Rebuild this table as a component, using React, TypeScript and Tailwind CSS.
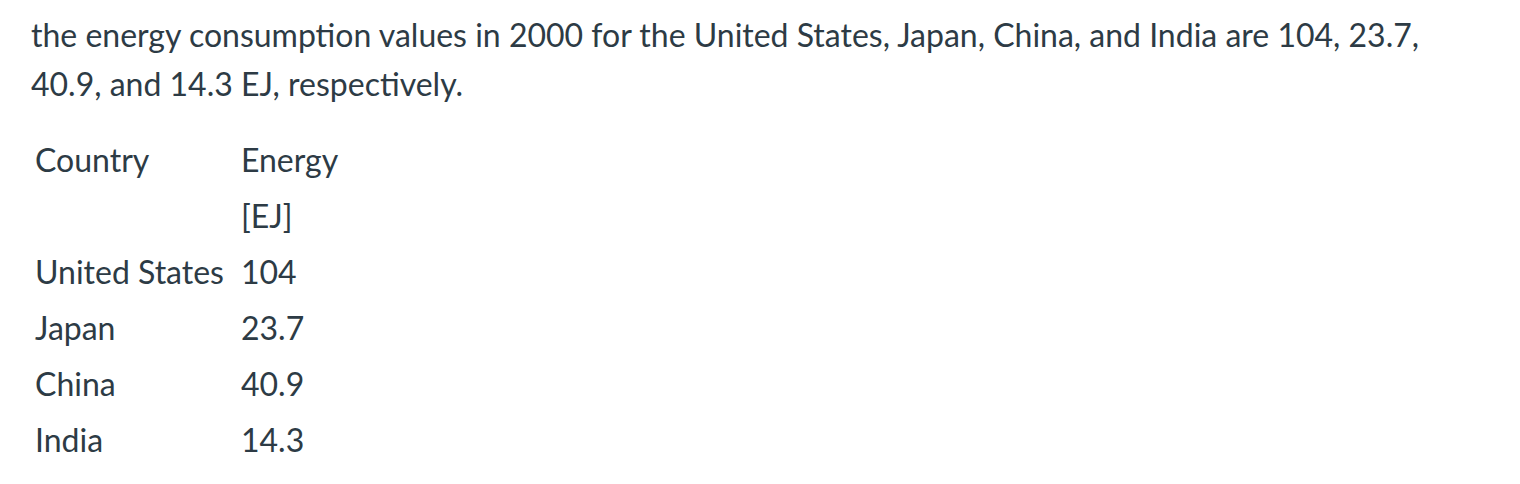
const rows = [
  { country: "United States", energy: "104" },
  { country: "Japan", energy: "23.7" },
  { country: "China", energy: "40.9" },
  { country: "India", energy: "14.3" },
];

export default function App() {
  return (
    <div className="min-h-[484px] w-[1520px] bg-white px-[31px] pt-[10px] font-['Lato',sans-serif] text-[32px] leading-[49px] text-[#2d3b45]">
      <p className="w-[1430px]">
        the energy consumption values in 2000 for the United States, Japan, China, and India are 104, 23.7,
        40.9, and 14.3 EJ, respectively.
      </p>
      <table className="mt-[24px] border-collapse leading-[56px]">
        <thead>
          <tr>
            <th className="px-[4px] text-left align-top font-normal">Country</th>
            <th className="w-[130px] pr-[4px] pl-[13px] text-left align-top font-normal">
              Energy [EJ]
            </th>
          </tr>
        </thead>
        <tbody>
          {rows.map((r) => (
            <tr key={r.country}>
              <td className="px-[4px]">{r.country}</td>
              <td className="pr-[4px] pl-[13px]">{r.energy}</td>
            </tr>
          ))}
        </tbody>
      </table>
    </div>
  );
}
